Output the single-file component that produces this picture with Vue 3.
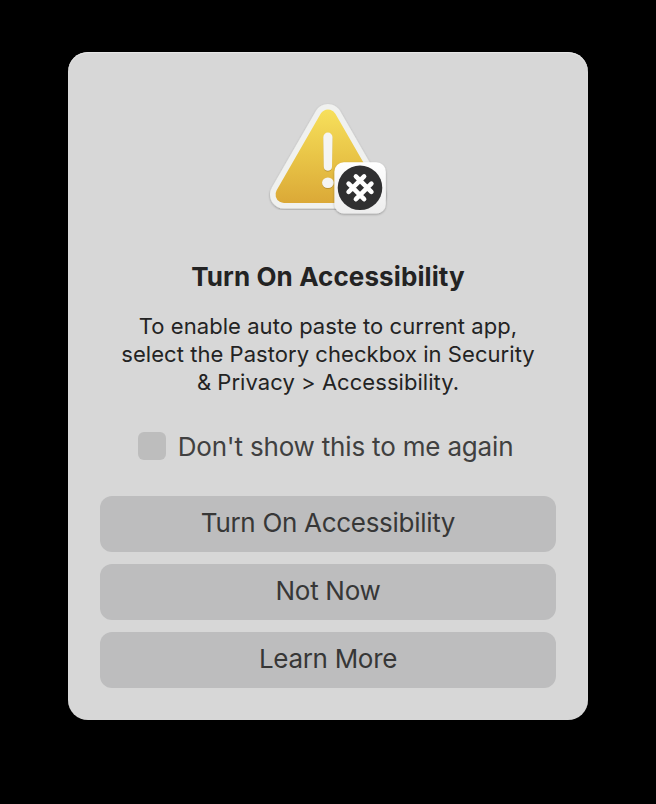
<script setup>
import { ref } from 'vue'

const suppressed = ref(false)
const actions = ['Turn On Accessibility', 'Not Now', 'Learn More']
const message = [
  'To enable auto paste to current app,',
  'select the Pastory checkbox in Security',
  '& Privacy > Accessibility.',
]
</script>

<template>
  <main class="screen">
    <section class="dialog" role="alertdialog">
      <svg class="icon" viewBox="258 92 140 132" aria-hidden="true">
        <defs>
          <linearGradient id="gold" gradientUnits="userSpaceOnUse" x1="0" y1="109" x2="0" y2="203">
            <stop offset="0" stop-color="#f7e05c" />
            <stop offset="0.5" stop-color="#e9c547" />
            <stop offset="1" stop-color="#dba937" />
          </linearGradient>
          <linearGradient id="tile" x1="0" y1="0" x2="0" y2="1">
            <stop offset="0" stop-color="#ffffff" />
            <stop offset="1" stop-color="#ededed" />
          </linearGradient>
          <filter id="soft" x="-20%" y="-20%" width="140%" height="140%">
            <feDropShadow dx="0" dy="1" stdDeviation="1" flood-color="#000" flood-opacity="0.3" />
          </filter>
          <filter id="mark" x="-50%" y="-50%" width="200%" height="200%">
            <feDropShadow dx="0" dy="0.8" stdDeviation="0.6" flood-color="#80601a" flood-opacity="0.5" />
          </filter>
        </defs>
        <path class="frame" filter="url(#soft)" d="M328 118 284 194.5H372Z" />
        <path class="face" d="M328 118 284 194.5H372Z" />
        <g fill="#f5f5f3" filter="url(#mark)">
          <path d="M323.3 137.2a4.6 4.6 0 0 1 9.2 0L332 166.6a4.1 4.1 0 0 1-8.2 0Z" />
          <ellipse cx="327.9" cy="182.8" rx="5.8" ry="5.2" />
        </g>
        <rect x="334.4" y="162.2" width="51.4" height="51.4" rx="9.5" fill="url(#tile)" filter="url(#soft)" />
        <circle cx="360" cy="187.8" r="22.3" fill="#303031" />
        <path
          class="hash"
          transform="translate(360 187.8)"
          d="M-4.1-11.4 11.4 4.1M-11.4-4.1 4.1 11.4M4.1-11.4-11.4 4.1M11.4-4.1-4.1 11.4"
        />
      </svg>
      <h1 class="title">Turn On Accessibility</h1>
      <p class="message">
        <span v-for="line in message" :key="line">{{ line }}</span>
      </p>
      <label class="suppress">
        <input v-model="suppressed" type="checkbox" class="box" />
        <span class="caption">Don't show this to me again</span>
      </label>
      <div class="actions">
        <button v-for="action in actions" :key="action" type="button">{{ action }}</button>
      </div>
    </section>
  </main>
</template>

<style>
body {
  background: #000;
}
</style>

<style scoped>
.screen {
  box-sizing: border-box;
  height: 804px;
  padding: 52px 68px 84px;
  background: #000;
  font-family: Inter, 'Liberation Sans', sans-serif;
}
.dialog {
  box-sizing: border-box;
  display: flex;
  flex-direction: column;
  align-items: center;
  width: 520px;
  height: 668px;
  padding: 40px 32px 32px;
  border-radius: 20px;
  background: #d7d7d7;
  box-shadow: inset 0 1px 1px #e8e8e8;
}
.icon {
  display: block;
  width: 140px;
  height: 132px;
}
.frame {
  fill: #f0f1ef;
  stroke: #f0f1ef;
  stroke-width: 28;
  stroke-linejoin: round;
}
.face {
  fill: url(#gold);
  stroke: url(#gold);
  stroke-width: 17;
  stroke-linejoin: round;
}
.hash {
  fill: none;
  stroke: #fff;
  stroke-width: 4.6;
  stroke-linecap: round;
}
.title {
  margin: 37px 0 0;
  color: #232323;
  font-size: 26px;
  font-weight: 700;
  line-height: 32px;
  letter-spacing: 0.1px;
  white-space: nowrap;
}
.message {
  display: flex;
  flex-direction: column;
  align-items: center;
  margin: 19px 0 0;
  color: #232323;
  font-size: 22px;
  line-height: 28px;
  letter-spacing: 0.05px;
  white-space: nowrap;
}
.suppress {
  display: flex;
  align-items: center;
  gap: 12px;
  margin: 34px 5px 0 0;
  color: #404040;
  font-size: 26px;
  line-height: 32px;
  letter-spacing: -0.18px;
  white-space: nowrap;
}
.caption {
  padding-top: 1px;
  margin-bottom: -1px;
}
.box {
  appearance: none;
  width: 28px;
  height: 28px;
  margin: 0;
  border-radius: 6px;
  background: #bdbdbd;
}
.actions {
  display: flex;
  flex-direction: column;
  gap: 12px;
  width: 100%;
  margin-top: 34px;
}
.actions button {
  height: 56px;
  padding: 0 0 2px;
  border: 0;
  border-radius: 12px;
  background: #bdbdbe;
  color: #373737;
  font: 400 26px/32px Inter, 'Liberation Sans', sans-serif;
  letter-spacing: -0.3px;
}
</style>
